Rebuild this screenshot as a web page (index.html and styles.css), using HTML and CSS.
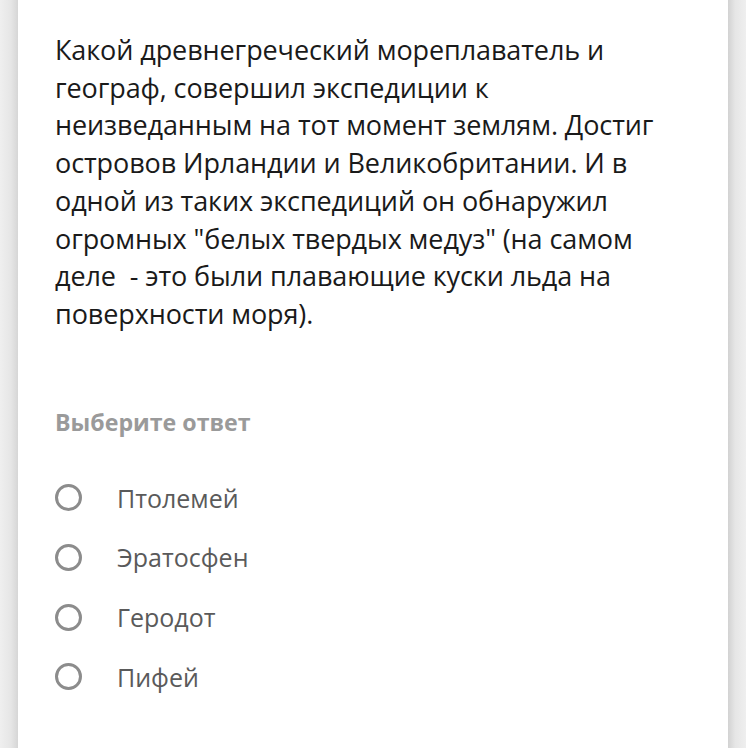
FILE: index.html
```html
<!DOCTYPE html>
<html lang="ru">
<head>
<meta charset="utf-8">
<link rel="stylesheet" href="styles.css">
</head>
<body>
<div class="page">
  <div class="edge edge-left"></div>
  <main class="card">
    <p class="question">Какой древнегреческий мореплаватель и географ, совершил экспедиции к неизведанным на тот момент землям. Достиг островов Ирландии и Великобритании. И в одной из таких экспедиций он обнаружил огромных "белых твердых медуз" (на самом деле&nbsp; - это были плавающие куски льда на поверхности моря).</p>
    <div class="label">Выберите ответ</div>
    <ul class="options">
      <li class="option"><span class="radio"></span><span class="text">Птолемей</span></li>
      <li class="option"><span class="radio"></span><span class="text">Эратосфен</span></li>
      <li class="option"><span class="radio"></span><span class="text">Геродот</span></li>
      <li class="option"><span class="radio"></span><span class="text">Пифей</span></li>
    </ul>
  </main>
  <div class="edge edge-right"></div>
</div>
</body>
</html>
```
FILE: styles.css
```css
html, body {
  margin: 0;
  padding: 0;
  height: 100%;
  background: #ffffff;
}
.page {
  display: flex;
  width: 746px;
  height: 748px;
  overflow: hidden;
  font-family: "Open Sans", "Noto Sans", sans-serif;
}
.edge {
  width: 18px;
  flex: none;
}
.edge-left {
  background: linear-gradient(to right, #efefef 0%, #e6e6e6 60%, #d6d6d6 100%);
}
.edge-right {
  background: linear-gradient(to right, #d2d2d2 0%, #e6e6e6 40%, #efefef 100%);
}
.card {
  flex: 1;
  background: #fff;
  padding: 31px 58px 0 37px;
}
.question {
  margin: 0;
  font-size: 27px;
  line-height: 37.7px;
  color: #1a1a1a;
  letter-spacing: -0.1px;
}
.label {
  margin-top: 74px;
  font-size: 23.2px;
  font-weight: 700;
  color: #9a9a9a;
  line-height: 30px;
}
.options {
  list-style: none;
  margin: 47px 0 0;
  padding: 0;
  display: flex;
  flex-direction: column;
  gap: 31.7px;
}
.option {
  display: flex;
  align-items: center;
  height: 28px;
}
.radio {
  width: 21px;
  height: 21px;
  border: 3px solid #8c8c8c;
  border-radius: 50%;
  flex: none;
}
.text {
  margin-left: 35px;
  font-size: 25px;
  color: #5a5a5a;
}
```
